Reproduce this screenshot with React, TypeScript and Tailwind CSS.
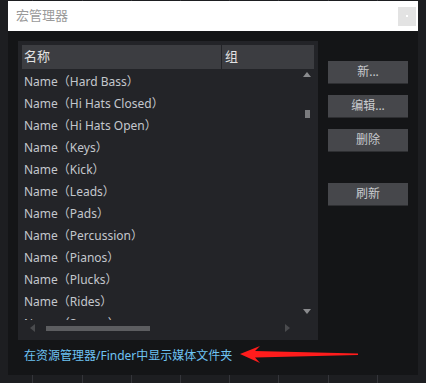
import React from "react";

const rows = [
  "Hard Bass",
  "Hi Hats Closed",
  "Hi Hats Open",
  "Keys",
  "Kick",
  "Leads",
  "Pads",
  "Percussion",
  "Pianos",
  "Plucks",
  "Rides",
  "Snares",
];

const buttons = [
  { label: "新...", gap: false },
  { label: "编辑...", gap: false },
  { label: "删除", gap: false },
  { label: "刷新", gap: true },
];

const font = { fontFamily: '"Noto Sans", "Noto Sans CJK SC", sans-serif' };

function Ticks() {
  return (
    <div className="flex h-full">
      <div className="w-[33px]" />
      {Array.from({ length: 8 }).map((_, i) => (
        <div key={i} className="w-[50px] border-l border-[#34353a]" />
      ))}
    </div>
  );
}

export default function App() {
  return (
    <div
      className="relative w-[426px] h-[383px] overflow-hidden bg-[#1d1e21] flex flex-col"
      style={font}
    >
      <div className="h-[1px]">
        <Ticks />
      </div>

      <div className="ml-[8px] w-[410px] h-[374px] flex flex-col">
        {/* title bar */}
        <div className="h-[30px] bg-white flex items-center justify-between pl-[8px] pr-[2px]">
          <span className="text-[13px] text-[#9a9a9a]">宏管理器</span>
          <div className="w-[18px] h-[19px] bg-[#e3e3e3] flex items-center justify-center">
            <span className="w-[2px] h-[2px] bg-white" />
          </div>
        </div>

        {/* body */}
        <div className="flex-1 bg-[#141517] flex flex-col px-[10px] pt-[10px]">
          <div className="flex">
            {/* list panel */}
            <div className="w-[300px] h-[299px] bg-[#232428] p-[4px] flex flex-col">
              <div className="h-[24px] flex gap-[1px] text-[13px] text-[#e2e2e2]">
                <div className="w-[199px] bg-[#3c3d41] flex items-center pl-[2px]">名称</div>
                <div className="flex-1 bg-[#3c3d41] flex items-center pl-[3px]">组</div>
              </div>

              <div className="flex h-[252px] overflow-hidden">
                <div className="flex-1 pt-[2px]">
                  {rows.map((r) => (
                    <div
                      key={r}
                      className="h-[22px] flex items-center pl-[2px] text-[12px] text-[#c3c7cd] whitespace-nowrap"
                    >
                      Name（{r}）
                    </div>
                  ))}
                </div>
                {/* vertical scrollbar */}
                <div className="w-[14px] flex flex-col items-center pt-[3px] pb-[6px]">
                  <div className="w-0 h-0 border-l-[4px] border-r-[4px] border-b-[5px] border-l-transparent border-r-transparent border-b-[#8a8b8e]" />
                  <div className="mt-[33px] w-[5px] h-[8px] bg-[#7a7b7e]" />
                  <div className="flex-1" />
                  <div className="w-0 h-0 border-l-[4px] border-r-[4px] border-t-[5px] border-l-transparent border-r-transparent border-t-[#8a8b8e]" />
                </div>
              </div>

              {/* horizontal scrollbar */}
              <div className="h-[16px] flex items-center pl-[8px] pr-[24px]">
                <div className="w-0 h-0 border-t-[4px] border-b-[4px] border-r-[5px] border-t-transparent border-b-transparent border-r-[#4a4b4e]" />
                <div className="ml-[11px] w-[104px] h-[5px] bg-[#5c5d60]" />
                <div className="flex-1" />
                <div className="w-0 h-0 border-t-[4px] border-b-[4px] border-l-[5px] border-t-transparent border-b-transparent border-l-[#4a4b4e]" />
              </div>
            </div>

            {/* buttons */}
            <div className="ml-[10px] pt-[20px] flex flex-col gap-[11px]">
              {buttons.map((b) => (
                <button
                  key={b.label}
                  className={`w-[80px] h-[23px] bg-[#46474b] border-b border-[#2e2f32] text-[12px] text-[#c9cbcf] flex items-center justify-center ${b.gap ? "mt-[20px]" : ""}`}
                >
                  {b.label}
                </button>
              ))}
            </div>
          </div>

          <div className="mt-[7px] pl-[6px] text-[12px] text-[#6ec3f3]">
            在资源管理器/Finder中显示媒体文件夹
          </div>
        </div>
      </div>

      <div className="h-[8px]">
        <Ticks />
      </div>

      {/* red annotation arrow */}
      <svg
        className="absolute left-[238px] top-[345px]"
        width="122"
        height="20"
        viewBox="0 0 122 20"
      >
        <path
          d="M2 9 L22 1 L17 6 L120 8.5 L120 10 L17 12.5 L22 18 Z"
          fill="#ff1c1c"
        />
      </svg>
    </div>
  );
}
